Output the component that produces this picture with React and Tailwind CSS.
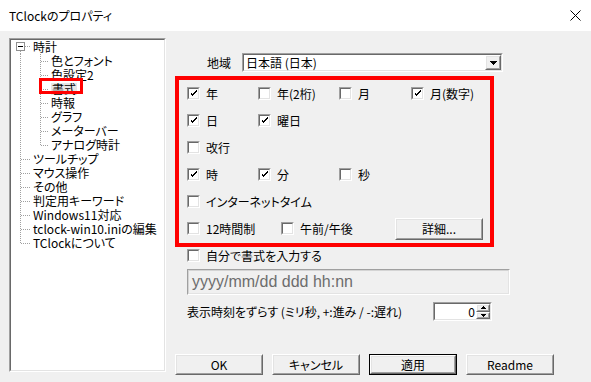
import React from 'react'

const font = "font-['Noto_Sans_CJK_JP',sans-serif] [font-feature-settings:'palt']"

function Sunken({ className = '', innerClassName = '', children }) {
  return (
    <div className={`border border-t-[#a0a0a0] border-l-[#a0a0a0] border-b-white border-r-white ${className}`}>
      <div className={`h-full w-full border border-t-[#696969] border-l-[#696969] border-b-[#e3e3e3] border-r-[#e3e3e3] ${innerClassName}`}>
        {children}
      </div>
    </div>
  )
}

function Raised({ className = '', children, def }) {
  const inner = (
    <div className="h-full w-full border border-t-white border-l-white border-b-[#696969] border-r-[#696969]">
      <div className="h-full w-full border border-t-[#e3e3e3] border-l-[#e3e3e3] border-b-[#a0a0a0] border-r-[#a0a0a0] bg-[#f0f0f0] flex items-center justify-center">
        {children}
      </div>
    </div>
  )
  if (def) return <div className={`border border-black ${className}`}>{inner}</div>
  return <div className={className}>{inner}</div>
}

function Check({ checked }) {
  return (
    <Sunken className="w-[13px] h-[13px] shrink-0" innerClassName="bg-white flex items-center justify-center">
      {checked && (
        <svg width="7" height="7" viewBox="0 0 7 7" shapeRendering="crispEdges">
          <path d="M0 2h1v3h1v1h1v-1h1v-1h1v-1h1v-1h1v-2h-1v1h-1v1h-1v1h-1v1h-1v-1h-1v-1h-1z" fill="#000" />
        </svg>
      )}
    </Sunken>
  )
}

function CB({ label, checked, w }) {
  return (
    <div className={`flex items-center gap-[6px] shrink-0 ${w}`}>
      <Check checked={checked} />
      <span className="leading-none">{label}</span>
    </div>
  )
}

const tree = [
  { t: '時計', lv: 0, first: true },
  { t: '色とフォント', lv: 1 },
  { t: '色設定2', lv: 1 },
  { t: '書式', lv: 1, sel: true },
  { t: '時報', lv: 1 },
  { t: 'グラフ', lv: 1 },
  { t: 'メーターバー', lv: 1 },
  { t: 'アナログ時計', lv: 1, lastChild: true },
  { t: 'ツールチップ', lv: 0 },
  { t: 'マウス操作', lv: 0 },
  { t: 'その他', lv: 0 },
  { t: '判定用キーワード', lv: 0 },
  { t: 'Windows11対応', lv: 0 },
  { t: 'tclock-win10.iniの編集', lv: 0 },
  { t: 'TClockについて', lv: 0, last: true },
]

function Connector({ item }) {
  const s = { stroke: '#a0a0a0', strokeDasharray: '1 1', strokeWidth: 1 }
  if (item.lv === 1) {
    return (
      <svg width="39" height="14" className="shrink-0" shapeRendering="crispEdges">
        <line x1="9.5" y1="0" x2="9.5" y2="14" style={s} />
        <line x1="29.5" y1="0" x2="29.5" y2={item.lastChild ? 8 : 14} style={s} />
        <line x1="30" y1="7.5" x2="38" y2="7.5" style={s} />
      </svg>
    )
  }
  return (
    <svg width="21" height="14" className="shrink-0" shapeRendering="crispEdges">
      {item.first ? (
        <>
          <rect x="5.5" y="2.5" width="8" height="8" fill="#fff" stroke="#909090" />
          <line x1="7" y1="6.5" x2="12" y2="6.5" stroke="#000" />
          <line x1="9.5" y1="11" x2="9.5" y2="14" style={s} />
          <line x1="14" y1="6.5" x2="20" y2="6.5" style={s} />
        </>
      ) : (
        <>
          <line x1="9.5" y1="0" x2="9.5" y2={item.last ? 8 : 14} style={s} />
          <line x1="10" y1="7.5" x2="20" y2="7.5" style={s} />
        </>
      )}
    </svg>
  )
}

export default function App() {
  return (
    <div className={`w-[591px] h-[382px] bg-[#f0f0f0] text-[12px] text-black overflow-hidden ${font}`}>
      <div className="h-[31px] bg-white flex items-center justify-between pl-[9px] pr-[10px]">
        <span className="text-[12px] leading-none">TClockのプロパティ</span>
        <svg width="11" height="11" viewBox="0 0 11 11">
          <path d="M0.5 0.5L10.5 10.5M10.5 0.5L0.5 10.5" stroke="#000" strokeWidth="1" />
        </svg>
      </div>

      <div className="flex items-start">
        <Sunken className="ml-[9px] mt-[7px] w-[157px] h-[334px]" innerClassName="bg-white">
          <div className="flex flex-col">
            {tree.map((it) => (
              <div key={it.t} className="relative h-[14px] flex items-center whitespace-nowrap">
                <Connector item={it} />
                <span className={`leading-none ml-[1px] ${it.sel ? 'bg-[#e6e6e6] px-[1px]' : ''}`}>{it.t}</span>
                {it.sel && (
                  <div className="absolute left-[28px] top-[-4px] w-[44px] h-[16px] border-[3px] border-[#ff0000]" />
                )}
              </div>
            ))}
          </div>
        </Sunken>

        <div className="ml-[9px] mt-[22px] flex flex-col">
          <div className="flex items-center h-[19px]">
            <div className="w-[67px] pl-[32px]">地域</div>
            <Sunken className="w-[261px] h-[19px]" innerClassName="bg-white flex items-center justify-between">
              <span className="pl-[2px] leading-none">日本語 (日本)</span>
              <Raised className="w-[16px] h-full">
                <svg width="7" height="4" viewBox="0 0 7 4" shapeRendering="crispEdges">
                  <path d="M0 0h7l-3.5 4z" fill="#000" />
                </svg>
              </Raised>
            </Sunken>
          </div>

          <div className="mt-[4px] w-[319px] h-[171px] border-[4px] border-[#ff0000] flex flex-col pl-[8px]">
            <div className="flex items-center h-[27px]">
              <CB label="年" checked w="w-[71px]" />
              <CB label="年(2桁)" w="w-[81px]" />
              <CB label="月" w="w-[72px]" />
              <CB label="月(数字)" checked />
            </div>
            <div className="flex items-center h-[27px]">
              <CB label="日" checked w="w-[71px]" />
              <CB label="曜日" checked />
            </div>
            <div className="flex items-center h-[27px]">
              <CB label="改行" />
            </div>
            <div className="flex items-center h-[27px]">
              <CB label="時" checked w="w-[71px]" />
              <CB label="分" checked w="w-[81px]" />
              <CB label="秒" />
            </div>
            <div className="flex items-center h-[27px]">
              <CB label="インターネットタイム" />
            </div>
            <div className="flex items-center h-[27px]">
              <CB label="12時間制" w="w-[94px]" />
              <CB label="午前/午後" w="w-[114px]" />
              <Raised className="w-[88px] h-[22px]">詳細...</Raised>
            </div>
          </div>

          <div className="mt-[2px] ml-[12px] h-[13px] flex items-center">
            <CB label="自分で書式を入力する" />
          </div>

          <Sunken className="mt-[7px] ml-[12px] w-[323px] h-[26px]" innerClassName="bg-[#f0f0f0] border-t-[#d4d4d4] border-l-[#d4d4d4] flex items-center">
            <span className="pl-[3px] text-[16px] leading-none text-[#6d6d6d] font-['Liberation_Sans',sans-serif]">yyyy/mm/dd ddd hh:nn</span>
          </Sunken>

          <div className="mt-[7px] ml-[12px] h-[19px] flex items-center">
            <span className="w-[246px] leading-none">表示時刻をずらす (ミリ秒, +:進み / -:遅れ)</span>
            <Sunken className="w-[59px] h-[19px]" innerClassName="bg-white flex items-center">
              <span className="flex-1 text-right pr-[1px] leading-none">0</span>
              <div className="w-[14px] h-full flex flex-col">
                <Raised className="h-1/2 w-full">
                  <svg width="5" height="3" viewBox="0 0 5 3" shapeRendering="crispEdges"><path d="M0 3h5L2.5 0z" fill="#000" /></svg>
                </Raised>
                <Raised className="h-1/2 w-full">
                  <svg width="5" height="3" viewBox="0 0 5 3" shapeRendering="crispEdges"><path d="M0 0h5L2.5 3z" fill="#000" /></svg>
                </Raised>
              </div>
            </Sunken>
          </div>

          <div className="mt-[33px] flex items-center gap-[9px]">
            <Raised className="w-[88px] h-[21px]">OK</Raised>
            <Raised className="w-[88px] h-[21px]">キャンセル</Raised>
            <Raised def className="w-[88px] h-[21px]">適用</Raised>
            <Raised className="w-[88px] h-[21px]">Readme</Raised>
          </div>
        </div>
      </div>
    </div>
  )
}
